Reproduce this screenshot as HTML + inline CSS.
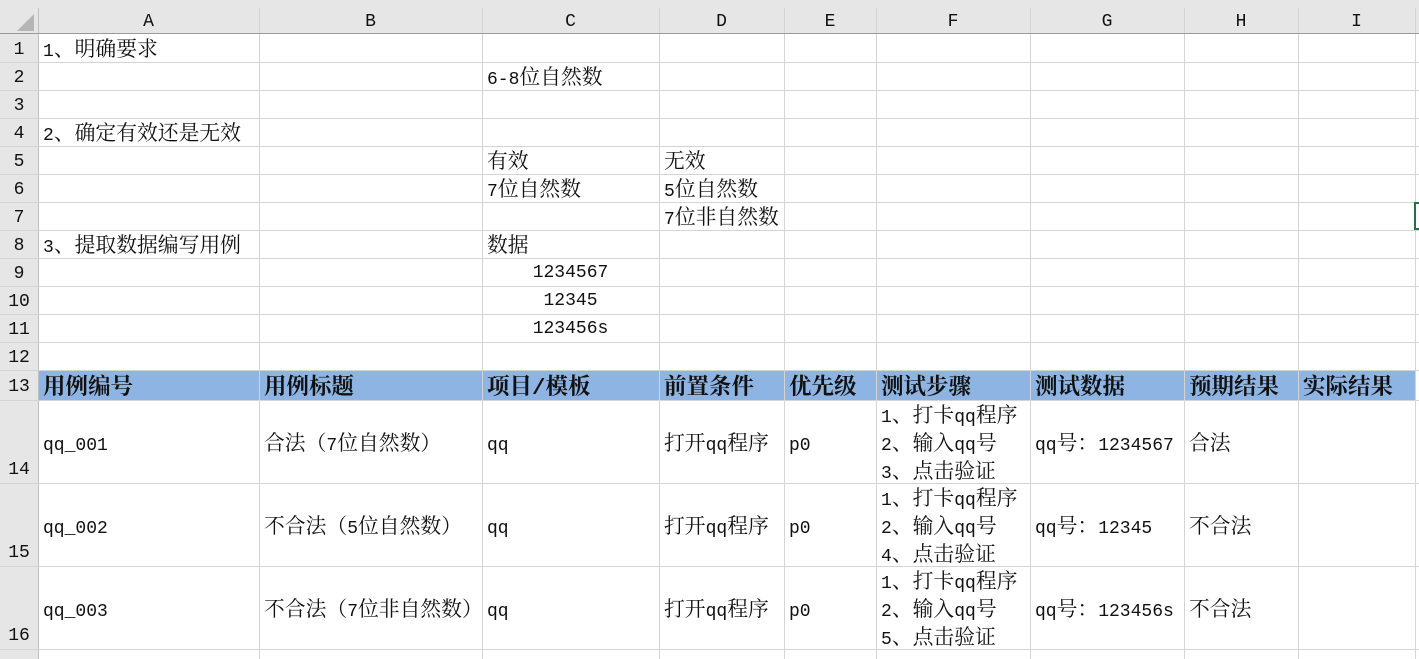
<!DOCTYPE html>
<html><head><meta charset="utf-8"><style>
body{margin:0;width:1419px;height:659px;overflow:hidden;background:#fff;font-family:"Liberation Mono","Noto Serif CJK SC",serif;font-size:18px;color:#111;position:relative}
div{position:absolute;white-space:nowrap}
.v{top:8px;width:1px;height:651px;background:#d4d4d4}
.hl{left:0;height:1px;width:1419px;background:#d4d4d4}
.t{line-height:28px;padding-left:5px;padding-top:3px;font-size:20.8px}
.t i{font-style:normal;font-size:18px}
.rn{left:0;width:38px;text-align:center;line-height:28px}
.ch{top:8px;height:26px;line-height:28px;text-align:center}
.b{font-weight:bold;font-size:22.5px;line-height:30px;padding-top:3px}
</style></head><body>
<div style="left:0;top:0;width:1419px;height:34px;background:#e6e6e6"></div>
<div style="left:0;top:34px;width:38px;height:625px;background:#e6e6e6"></div>
<div style="left:38px;top:370px;width:1377px;height:30px;background:#8eb4e3"></div>
<svg style="position:absolute;left:14px;top:12px" width="22" height="20"><polygon points="20,2 20,19 3,19" fill="#b5b5b5"/></svg>
<div class="v" style="left:38px;background:#c0c0c0"></div>
<div class="v" style="left:259px"></div><div class="v" style="left:482px"></div><div class="v" style="left:659px"></div><div class="v" style="left:784px"></div><div class="v" style="left:876px"></div><div class="v" style="left:1030px"></div><div class="v" style="left:1184px"></div><div class="v" style="left:1298px"></div><div class="v" style="left:1415px"></div>
<div class="hl" style="top:33px;background:#9a9a9a"></div>
<div class="hl" style="top:62px"></div><div class="hl" style="top:90px"></div><div class="hl" style="top:118px"></div><div class="hl" style="top:146px"></div><div class="hl" style="top:174px"></div><div class="hl" style="top:202px"></div><div class="hl" style="top:230px"></div><div class="hl" style="top:258px"></div><div class="hl" style="top:286px"></div><div class="hl" style="top:314px"></div><div class="hl" style="top:342px"></div><div class="hl" style="top:370px"></div><div class="hl" style="top:400px"></div><div class="hl" style="top:483px"></div><div class="hl" style="top:566px"></div><div class="hl" style="top:649px"></div>
<div style="left:1414px;top:202px;width:5px;height:28px;border:2px solid #217346;border-right:none;box-sizing:border-box"></div>
<div class="ch" style="left:38px;width:221px">A</div><div class="ch" style="left:259px;width:223px">B</div><div class="ch" style="left:482px;width:177px">C</div><div class="ch" style="left:659px;width:125px">D</div><div class="ch" style="left:784px;width:92px">E</div><div class="ch" style="left:876px;width:154px">F</div><div class="ch" style="left:1030px;width:154px">G</div><div class="ch" style="left:1184px;width:114px">H</div><div class="ch" style="left:1298px;width:117px">I</div>
<div class="rn" style="top:36px">1</div><div class="rn" style="top:64px">2</div><div class="rn" style="top:92px">3</div><div class="rn" style="top:120px">4</div><div class="rn" style="top:148px">5</div><div class="rn" style="top:176px">6</div><div class="rn" style="top:204px">7</div><div class="rn" style="top:232px">8</div><div class="rn" style="top:260px">9</div><div class="rn" style="top:288px">10</div><div class="rn" style="top:316px">11</div><div class="rn" style="top:344px">12</div><div class="rn" style="top:373px">13</div><div class="rn" style="top:456px">14</div><div class="rn" style="top:539px">15</div><div class="rn" style="top:622px">16</div>
<div class="t" style="left:38px;top:35px"><i>1</i>、明确要求</div>
<div class="t" style="left:482px;top:63px"><i>6-8</i>位自然数</div>
<div class="t" style="left:38px;top:119px"><i>2</i>、确定有效还是无效</div>
<div class="t" style="left:482px;top:147px">有效</div><div class="t" style="left:659px;top:147px">无效</div>
<div class="t" style="left:482px;top:175px"><i>7</i>位自然数</div><div class="t" style="left:659px;top:175px"><i>5</i>位自然数</div>
<div class="t" style="left:659px;top:203px"><i>7</i>位非自然数</div>
<div class="t" style="left:38px;top:231px"><i>3</i>、提取数据编写用例</div><div class="t" style="left:482px;top:231px">数据</div>
<div style="left:482px;width:177px;text-align:center;top:259px;line-height:28px">1234567</div>
<div style="left:482px;width:177px;text-align:center;top:287px;line-height:28px">12345</div>
<div style="left:482px;width:177px;text-align:center;top:315px;line-height:28px">123456s</div>
<div class="t b" style="left:38px;top:370px">用例编号</div><div class="t b" style="left:259px;top:370px">用例标题</div><div class="t b" style="left:482px;top:370px">项目/模板</div><div class="t b" style="left:659px;top:370px">前置条件</div><div class="t b" style="left:784px;top:370px">优先级</div><div class="t b" style="left:876px;top:370px">测试步骤</div><div class="t b" style="left:1030px;top:370px">测试数据</div><div class="t b" style="left:1184px;top:370px">预期结果</div><div class="t b" style="left:1298px;top:370px">实际结果</div>

<div class="t" style="left:38px;top:429px"><i>qq_001</i></div><div class="t" style="left:259px;top:429px">合法（<i>7</i>位自然数）</div><div class="t" style="left:482px;top:429px"><i>qq</i></div><div class="t" style="left:659px;top:429px">打开<i>qq</i>程序</div><div class="t" style="left:784px;top:429px"><i>p0</i></div>
<div class="t" style="left:876px;top:401px"><i>1</i>、打卡<i>qq</i>程序<br><i>2</i>、输入<i>qq</i>号<br><i>3</i>、点击验证</div><div class="t" style="left:1030px;top:429px"><i>qq</i>号：<i>1234567</i></div><div class="t" style="left:1184px;top:429px">合法</div>

<div class="t" style="left:38px;top:512px"><i>qq_002</i></div><div class="t" style="left:259px;top:512px">不合法（<i>5</i>位自然数）</div><div class="t" style="left:482px;top:512px"><i>qq</i></div><div class="t" style="left:659px;top:512px">打开<i>qq</i>程序</div><div class="t" style="left:784px;top:512px"><i>p0</i></div>
<div class="t" style="left:876px;top:484px"><i>1</i>、打卡<i>qq</i>程序<br><i>2</i>、输入<i>qq</i>号<br><i>4</i>、点击验证</div><div class="t" style="left:1030px;top:512px"><i>qq</i>号：<i>12345</i></div><div class="t" style="left:1184px;top:512px">不合法</div>

<div class="t" style="left:38px;top:595px"><i>qq_003</i></div><div class="t" style="left:259px;top:595px">不合法（<i>7</i>位非自然数）</div><div class="t" style="left:482px;top:595px"><i>qq</i></div><div class="t" style="left:659px;top:595px">打开<i>qq</i>程序</div><div class="t" style="left:784px;top:595px"><i>p0</i></div>
<div class="t" style="left:876px;top:567px"><i>1</i>、打卡<i>qq</i>程序<br><i>2</i>、输入<i>qq</i>号<br><i>5</i>、点击验证</div><div class="t" style="left:1030px;top:595px"><i>qq</i>号：<i>123456s</i></div><div class="t" style="left:1184px;top:595px">不合法</div>
</body></html>
